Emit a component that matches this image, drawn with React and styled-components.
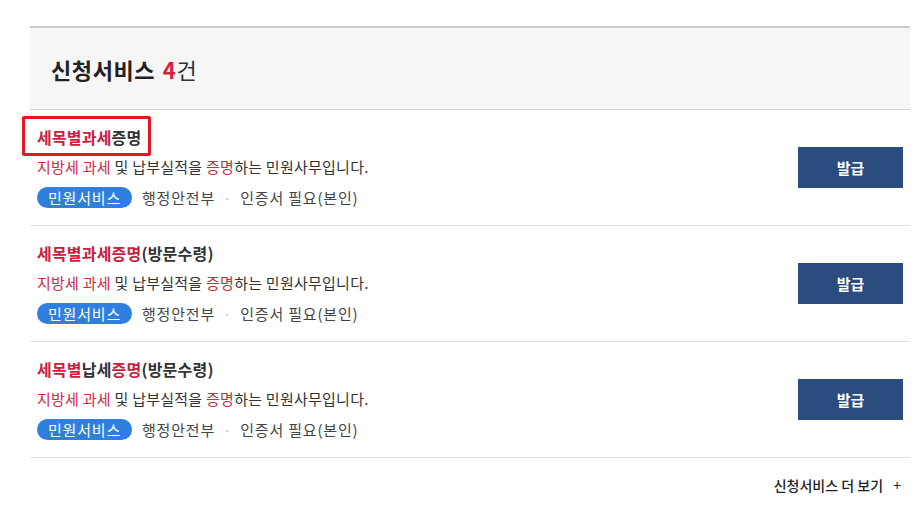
import React from "react";
import styled, { createGlobalStyle } from "styled-components";

const GlobalStyle = createGlobalStyle`
  body {
    margin: 0;
    background: #fff;
    font-family: "Noto Sans CJK KR", "Noto Sans", sans-serif;
    color: #333;
  }
`;

const services = [
  {
    id: 1,
    title: [
      { text: "세목별과세", hl: true },
      { text: "증명" },
    ],
    boxed: true,
  },
  {
    id: 2,
    title: [
      { text: "세목별과세증명", hl: true },
      { text: "(방문수령)" },
    ],
  },
  {
    id: 3,
    title: [
      { text: "세목별", hl: true },
      { text: "납세" },
      { text: "증명", hl: true },
      { text: "(방문수령)" },
    ],
  },
];

export default function App() {
  return (
    <>
      <GlobalStyle />
      <Page>
        {/* 결과 헤더 */}
        <ResultHead>
          <HeadTitle>
            신청서비스 <Count>4</Count>
            <CountUnit>건</CountUnit>
          </HeadTitle>
        </ResultHead>

        {/* 서비스 목록 */}
        <List>
          {services.map((item) => (
            <Row key={item.id}>
              <Info>
                <Title>
                  {item.title.map((t, i) =>
                    t.hl ? <Mark key={i}>{t.text}</Mark> : <span key={i}>{t.text}</span>
                  )}
                  {item.boxed && <FocusBox />}
                </Title>
                <Desc>
                  <Mark $light>지방세</Mark> <Mark $light>과세</Mark> 및 납부실적을{" "}
                  <Mark $light>증명</Mark>하는 민원사무입니다.
                </Desc>
                <Meta>
                  <Tag>민원서비스</Tag>
                  <MetaText>행정안전부</MetaText>
                  <Dot>·</Dot>
                  <MetaText>인증서 필요(본인)</MetaText>
                </Meta>
              </Info>
              <IssueButton>발급</IssueButton>
            </Row>
          ))}
        </List>

        <MoreArea>
          <MoreLink>
            신청서비스 더 보기 <Plus>+</Plus>
          </MoreLink>
        </MoreArea>
      </Page>
    </>
  );
}

const Page = styled.div`
  width: 880px;
  margin-left: 30px;
  padding-top: 26px;
`;

const ResultHead = styled.div`
  height: 81px;
  background: #f6f6f6;
  border-top: 2px solid #cccccc;
  border-bottom: 1px solid #d2d2d2;
  display: flex;
  align-items: center;
  padding-left: 21px;
`;

const HeadTitle = styled.h2`
  margin: 0;
  font-size: 22px;
  font-weight: 700;
  color: #222;
  line-height: 1;
  letter-spacing: 0.6px;
`;

const Count = styled.span`
  color: #d6213d;
  margin-left: 2px;
`;

const CountUnit = styled.span`
  font-weight: 400;
  color: #333;
`;

const List = styled.ul`
  list-style: none;
  margin: 0;
  padding: 0;
`;

const Row = styled.li`
  display: flex;
  align-items: center;
  justify-content: space-between;
  height: 116px;
  box-sizing: border-box;
  padding: 12px 7px 13px 7px;
  border-bottom: 1px solid #e2e2e2;
`;

const Info = styled.div`
  display: flex;
  flex-direction: column;
`;

const Title = styled.div`
  position: relative;
  align-self: flex-start;
  height: 30px;
  line-height: 30px;
  font-size: 16px;
  font-weight: 700;
  color: #333;
  letter-spacing: 0.2px;
`;

const Mark = styled.span`
  color: ${(p) => (p.$light ? "#cc2a46" : "#c8213d")};
`;

const FocusBox = styled.span`
  position: absolute;
  left: -15px;
  right: -10px;
  top: -6px;
  bottom: -4px;
  border: 3px solid #e3171f;
  border-radius: 2px;
  pointer-events: none;
`;

const Desc = styled.p`
  margin: 0;
  height: 30px;
  line-height: 30px;
  font-size: 15px;
  color: #333;
  letter-spacing: 0.25px;
`;

const Meta = styled.div`
  display: flex;
  align-items: center;
  height: 30px;
  font-size: 15px;
  letter-spacing: 0.8px;
`;

const Tag = styled.span`
  display: inline-flex;
  align-items: center;
  justify-content: center;
  height: 21px;
  padding: 0 11px;
  border-radius: 11px;
  background: #2f7fe0;
  color: #fff;
  margin-right: 10px;
`;

const MetaText = styled.span`
  color: #444;
`;

const Dot = styled.span`
  color: #c8c8c8;
  margin: 0 8px;
`;

const IssueButton = styled.button`
  width: 105px;
  height: 41px;
  border: none;
  background: #2b4c7e;
  color: #fff;
  font-family: inherit;
  font-size: 15px;
  font-weight: 700;
  cursor: pointer;
`;

const MoreArea = styled.div`
  display: flex;
  justify-content: flex-end;
  padding: 17px 9px 0 0;
`;

const MoreLink = styled.a`
  font-size: 14px;
  font-weight: 500;
  color: #222;
  cursor: pointer;
`;

const Plus = styled.span`
  margin-left: 7px;
  font-weight: 400;
`;
